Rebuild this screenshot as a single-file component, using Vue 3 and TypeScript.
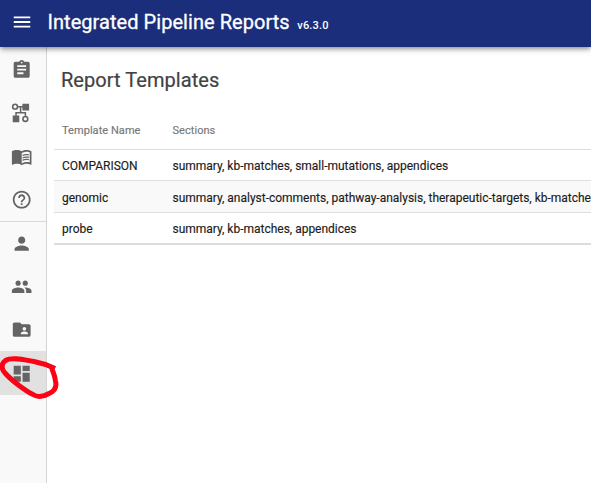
<script setup lang="ts">
interface NavItem {
  name: string
  path: string
  active?: boolean
}

interface Template {
  name: string
  sections: string[]
}

const general: NavItem[] = [
  {
    name: 'reports',
    path: 'M19 3h-4.18C14.4 1.84 13.3 1 12 1c-1.3 0-2.4.84-2.82 2H5c-1.1 0-2 .9-2 2v14c0 1.100.9 2 2 2h14c1.100 0 2-.9 2-2V5c0-1.100-.9-2-2-2zm-7 0c.55 0 1 .45 1 1s-.45 1-1 1-1-.45-1-1 .45-1 1-1zm2 14H7v-2h7v2zm3-4H7v-2h10v2zm0-4H7V7h10v2z',
  },
  {
    name: 'graph',
    path: 'M4.6 1.600a3.600 3.600 0 1 0 0 7.200a3.600 3.600 0 1 0 0-7.200zM4.6 3.400a1.800 1.800 0 1 1 0 3.600a1.800 1.800 0 1 1 0-3.600zM12.800 1.900h7.500v7.500h-7.500zM1.900 15.200h7.400v7.400h-7.400zM16.100 15.400a3.600 3.600 0 1 0 0 7.200a3.600 3.600 0 1 0 0-7.200zM16.100 17.200a1.800 1.800 0 1 1 0 3.600a1.800 1.800 0 1 1 0-3.600zM8.100 4.400H12.800v1.700H11.600v5H17v4.300h-1.700v-2.600H6.500v2.400H4.800v-4.100h5.100V6.100H8.100z',
  },
  {
    name: 'knowledge base',
    path: 'M21 5c-1.110-.35-2.330-.5-3.500-.5-1.950 0-4.050.4-5.500 1.500-1.450-1.100-3.550-1.500-5.500-1.500S2.450 4.900 1 6v14.650c0 .25.25.5.5.5.1 0 .15-.05.25-.05C3.100 20.450 5.050 20 6.500 20c1.950 0 4.050.4 5.500 1.500 1.350-.85 3.800-1.500 5.500-1.500 1.650 0 3.350.3 4.750 1.050.1.05.15.05.25.05.25 0 .5-.25.5-.5V6c-.6-.45-1.250-.75-2-1zm0 13.500c-1.100-.35-2.300-.5-3.500-.5-1.700 0-4.150.65-5.500 1.500V8c1.350-.85 3.800-1.500 5.500-1.500 1.200 0 2.400.15 3.500.5v11.500z M17.500 10.500c.88 0 1.730.09 2.500.26V9.240c-.79-.15-1.640-.24-2.500-.24-1.700 0-3.240.29-4.500.83v1.660c1.130-.64 2.700-.99 4.500-.99zM13 12.490v1.660c1.130-.64 2.700-.99 4.500-.99.88 0 1.730.09 2.500.26V11.900c-.79-.15-1.640-.24-2.500-.24-1.700 0-3.240.3-4.500.83zM17.500 14.330c-1.700 0-3.240.29-4.500.83v1.660c1.130-.64 2.700-.99 4.500-.99.88 0 1.730.09 2.500.26v-1.520c-.79-.16-1.640-.24-2.500-.24z',
  },
  {
    name: 'help',
    path: 'M11 18h2v-2h-2v2zm1-16C6.480 2 2 6.480 2 12s4.480 10 10 10 10-4.480 10-10S17.520 2 12 2zm0 18c-4.410 0-8-3.590-8-8s3.590-8 8-8 8 3.590 8 8-3.590 8-8 8zm0-14c-2.210 0-4 1.790-4 4h2c0-1.100.9-2 2-2s2 .9 2 2c0 2-3 1.750-3 5h2c0-2.250 3-2.500 3-5 0-2.210-1.790-4-4-4z',
  },
]

const admin: NavItem[] = [
  {
    name: 'users',
    path: 'M12 12c2.210 0 4-1.790 4-4s-1.790-4-4-4-4 1.790-4 4 1.790 4 4 4zm0 2c-2.670 0-8 1.340-8 4v2h16v-2c0-2.660-5.330-4-8-4z',
  },
  {
    name: 'groups',
    path: 'M16 11c1.660 0 2.990-1.340 2.990-3S17.660 5 16 5c-1.660 0-3 1.340-3 3s1.340 3 3 3zm-8 0c1.660 0 2.990-1.340 2.990-3S9.660 5 8 5C6.340 5 5 6.340 5 8s1.340 3 3 3zm0 2c-2.330 0-7 1.170-7 3.500V19h14v-2.500c0-2.330-4.670-3.500-7-3.500zm8 0c-.29 0-.62.02-.97.05 1.160.84 1.970 1.970 1.970 3.450V19h6v-2.500c0-2.330-4.670-3.500-7-3.500z',
  },
  {
    name: 'projects',
    path: 'M20 6h-8l-2-2H4c-1.100 0-1.990.9-1.990 2L2 18c0 1.100.9 2 2 2h16c1.100 0 2-.9 2-2V8c0-1.100-.9-2-2-2zm-5 3c1.100 0 2 .9 2 2s-.9 2-2 2-2-.9-2-2 .9-2 2-2zm4 8h-8v-1c0-1.330 2.670-2 4-2s4 .67 4 2v1z',
  },
  {
    name: 'templates',
    path: 'M3 13h8V3H3v10zm0 8h8v-6H3v6zm10 0h8V11h-8v10zm0-18v6h8V3h-8z',
    active: true,
  },
]

const groups: NavItem[][] = [general, admin]

const templates: Template[] = [
  { name: 'COMPARISON', sections: ['summary', 'kb-matches', 'small-mutations', 'appendices'] },
  {
    name: 'genomic',
    sections: ['summary', 'analyst-comments', 'pathway-analysis', 'therapeutic-targets', 'kb-matches'],
  },
  { name: 'probe', sections: ['summary', 'kb-matches', 'appendices'] },
]
</script>

<template>
  <div class="app">
    <header class="bar">
      <svg class="menu" viewBox="0 0 24 24"><path d="M3 18h18v-2H3v2zm0-5h18v-2H3v2zm0-7v2h18V6H3z" /></svg>
      <span class="brand">Integrated Pipeline Reports</span>
      <span class="version">v6.3.0</span>
    </header>
    <div class="body">
      <nav class="side">
        <div v-for="(group, g) in groups" :key="g" class="group">
          <a v-for="item in group" :key="item.name" class="item" :class="{ active: item.active }">
            <svg class="icon" viewBox="0 0 24 24"><path :d="item.path" fill-rule="evenodd" /></svg>
          </a>
        </div>
      </nav>
      <main class="content">
        <h1 class="heading">Report Templates</h1>
        <div class="table">
          <div class="row head"><span>Template Name</span><span>Sections</span></div>
          <div v-for="t in templates" :key="t.name" class="row">
            <span>{{ t.name }}</span><span class="sections">{{ t.sections.join(', ') }}</span>
          </div>
        </div>
      </main>
    </div>
    <svg class="mark" viewBox="0 0 64 54">
      <path d="M55 18.500C48 15 42 13 34 11.500C25 10 12 6.500 5.500 10.500C1 13.500 1 19 5 23C12 31 26 41 33 44.500C37 47 43 47 49 43.500C55 41 57 37 55.500 31C55 26 53.500 23 51.500 17.500" />
    </svg>
  </div>
</template>

<style>
body {
  overflow: hidden;
}
</style>

<style scoped>
.app {
  position: relative;
  display: flex;
  flex-direction: column;
  width: 591px;
  height: 483px;
  overflow: hidden;
  background: #fff;
  font-family: Roboto, 'Liberation Sans', sans-serif;
}
.bar {
  z-index: 1;
  display: flex;
  flex: none;
  align-items: baseline;
  box-sizing: border-box;
  height: 47px;
  padding: 10px 0 0 11px;
  background: #1a2e7c;
  color: #fff;
  box-shadow: 0 2px 4px -1px rgba(0, 0, 0, 0.3), 0 3px 5px rgba(0, 0, 0, 0.15), 0 1px 9px rgba(0, 0, 0, 0.12);
}
.menu {
  align-self: flex-start;
  width: 22px;
  height: 22px;
  margin-top: 1px;
  fill: currentColor;
}
.brand {
  margin-left: 14.5px;
  font-size: 20px;
  letter-spacing: 0.05px;
  line-height: 24px;
  -webkit-text-stroke: 0.3px currentColor;
}
.version {
  margin-left: 7.5px;
  font-size: 11px;
  font-weight: 500;
  letter-spacing: 0.2px;
}
.body {
  display: flex;
  flex: 1;
  min-height: 0;
}
.side {
  box-sizing: border-box;
  flex: none;
  width: 47px;
  padding-top: 1px;
  border-right: 1px solid #d4d4d4;
  background: #f9f9f9;
}
.group + .group {
  border-top: 1px solid #d8d8d8;
}
.item {
  display: flex;
  align-items: center;
  box-sizing: border-box;
  height: 43.2px;
  padding: 0.6px 0 0 10.6px;
}
.item.active {
  background: #e1e1e1;
}
.icon {
  width: 21.4px;
  height: 21.4px;
  fill: #646464;
}
.content {
  flex: 1;
  min-width: 0;
  padding-left: 7px;
  overflow: hidden;
}
.heading {
  margin: 0;
  padding: 20px 0 0 7px;
  color: #424242;
  font-size: 20px;
  font-weight: 400;
  letter-spacing: 0.05px;
  line-height: 26px;
  -webkit-text-stroke: 0.2px currentColor;
}
.table {
  margin-top: 18px;
  border-bottom: 1px solid #dadada;
}
.row {
  display: grid;
  grid-template-columns: 110.5px 1fr;
  align-items: center;
  box-sizing: border-box;
  height: 31.4px;
  padding: 2px 0 0 8px;
  border-bottom: 1px solid #dedede;
  color: #1c1c1c;
  font-size: 12px;
  letter-spacing: -0.01px;
  white-space: nowrap;
  -webkit-text-stroke: 0.15px currentColor;
}
.row:nth-child(3) {
  background: #f9f9f9;
}
.head {
  height: 39px;
  padding-top: 0;
  color: #777;
  font-size: 11px;
  letter-spacing: 0.05px;
}
.sections {
  min-width: 0;
}
.mark {
  position: absolute;
  z-index: 2;
  top: 350px;
  left: 0;
  width: 64px;
  height: 54px;
  fill: none;
  stroke: #fb0315;
  stroke-width: 5;
  stroke-linejoin: round;
}
</style>
